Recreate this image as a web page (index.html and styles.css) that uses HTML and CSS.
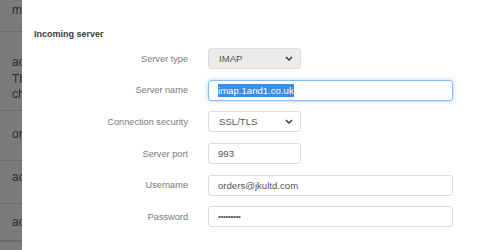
FILE: index.html
```html
<!DOCTYPE html>
<html lang="en">
<head>
    <meta charset="UTF-8">
    <title>Incoming server</title>
    <link rel="stylesheet" href="styles.css">
</head>
<body>
    <div class="backdrop">
        <div class="list-item first">messages</div>
        <div class="list-item second">
            <div>account</div>
            <p>The settings<br>changed</p>
        </div>
        <div class="list-item third">orders</div>
        <div class="list-item fourth">account</div>
        <div class="list-item fifth">account</div>
        <div class="list-item"></div>
    </div>

    <div class="modal">
        <h2 class="section-title">Incoming server</h2>
        <div class="form-grid">
            <label>Server type</label>
            <div class="select-wrap">
                <select class="field short" disabled>
                    <option>IMAP</option>
                </select>
                <svg class="chevron" width="8" height="5" viewBox="0 0 8 5"><path d="M1 1l3 3 3-3" fill="none" stroke="#333" stroke-width="1.4"/></svg>
            </div>

            <label>Server name</label>
            <div class="field long focused"><span class="selected">imap.1and1.co.uk</span></div>

            <label>Connection security</label>
            <div class="select-wrap">
                <select class="field short">
                    <option>SSL/TLS</option>
                </select>
                <svg class="chevron" width="8" height="5" viewBox="0 0 8 5"><path d="M1 1l3 3 3-3" fill="none" stroke="#333" stroke-width="1.4"/></svg>
            </div>

            <label>Server port</label>
            <input class="field short" type="text" value="993">

            <label>Username</label>
            <input class="field long" type="text" value="orders@jkultd.com">

            <label>Password</label>
            <input class="field long password" type="password" value="password1">
        </div>
    </div>
</body>
</html>
```

FILE: styles.css
```css
body {
    margin: 0;
    padding: 0;
    font-family: "Liberation Sans", Arial, sans-serif;
    display: flex;
    height: 250px;
    overflow: hidden;
    background-color: #fff;
}

.backdrop {
    width: 22px;
    flex-shrink: 0;
    overflow: hidden;
    background-color: #7b7b7b;
    color: #2e2e2e;
    font-size: 12px;
    white-space: nowrap;
}

.list-item {
    padding-left: 12px;
    border-bottom: 1px solid #6b6b6b;
    box-sizing: border-box;
    overflow: hidden;
}

.list-item.first {
    height: 32px;
    padding-top: 3px;
}

.list-item.second {
    height: 79px;
    padding-top: 23px;
    line-height: 15px;
}

.list-item.second p {
    margin: 2px 0 0;
    line-height: 15px;
}

.list-item.third {
    height: 50px;
    padding-top: 16px;
}

.list-item.fourth {
    height: 43px;
    padding-top: 9px;
}

.list-item.fifth {
    height: 37px;
    padding-top: 11px;
}

.modal {
    flex: 1;
    padding: 28px 0 0 12px;
}

.section-title {
    margin: 0 0 8px;
    font-size: 9px;
    line-height: 12px;
    font-weight: bold;
    color: #3a3a3a;
}

.form-grid {
    display: grid;
    grid-template-columns: 154px auto;
    grid-auto-rows: 21px;
    column-gap: 20px;
    row-gap: 10.7px;
    align-items: center;
}

.form-grid label {
    text-align: right;
    font-size: 9.2px;
    color: #7a7a7a;
}

.field {
    box-sizing: border-box;
    height: 21px;
    border: 1px solid #dcdcdc;
    border-radius: 3px;
    background-color: #fff;
    font-family: "Liberation Sans", Arial, sans-serif;
    font-size: 9.6px;
    color: #555;
    padding: 0 0 0 9px;
    margin: 0;
    outline: none;
}

.field.short {
    width: 93px;
}

.field.long {
    width: 245px;
}

.field.password {
    font-size: 8px;
    letter-spacing: -0.3px;
}

.select-wrap {
    position: relative;
    width: 93px;
    height: 21px;
}

select.field {
    appearance: none;
    -webkit-appearance: none;
    padding-left: 10px;
}

select.field:disabled {
    background-color: #ebebeb;
    color: #555;
    opacity: 1;
}

.chevron {
    position: absolute;
    right: 8px;
    top: 8px;
    pointer-events: none;
}

.field.focused {
    display: flex;
    align-items: center;
    border-color: #86bdf0;
    box-shadow: 0 0 4px rgba(80, 160, 235, 0.45);
}

.selected {
    background-color: #3b8ee8;
    color: #fff;
    line-height: 13px;
}
```
